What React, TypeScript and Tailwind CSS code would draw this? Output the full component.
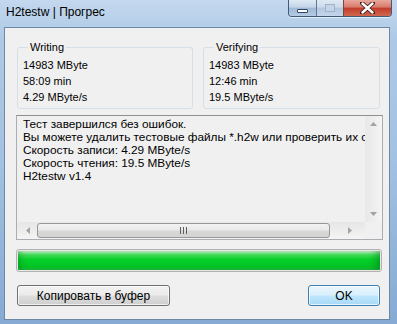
import React from "react";

const font = "font-['Liberation_Sans',Arial,sans-serif]";

function GroupBox({ title, lines, className }: { title: string; lines: string[]; className: string }) {
  return (
    <fieldset className={`rounded-[3px] border border-[#d5dfe5] pl-[5px] pt-[3px] pb-[3px] ${className}`}>
      <legend className="ml-[5px] px-[2px] text-[11px] leading-[14px] text-black">{title}</legend>
      {lines.map((l) => (
        <div key={l} className="text-[11px] leading-[16px] text-black">
          {l}
        </div>
      ))}
    </fieldset>
  );
}

function Arrow({ dir }: { dir: "up" | "down" | "left" | "right" }) {
  const pts = {
    up: "0,4 3.5,0 7,4",
    down: "0,0 3.5,4 7,0",
    left: "4,0 0,3.5 4,7",
    right: "0,0 4,3.5 0,7",
  }[dir];
  const vert = dir === "up" || dir === "down";
  return (
    <svg width={vert ? 7 : 4} height={vert ? 4 : 7} viewBox={vert ? "0 0 7 4" : "0 0 4 7"}>
      <polygon points={pts} fill="#a3a3a3" />
    </svg>
  );
}

function LogBox() {
  const lines = [
    "Тест завершился без ошибок.",
    "Вы можете удалить тестовые файлы *.h2w или проверить их снова",
    "Скорость записи: 4.29 MByte/s",
    "Скорость чтения: 19.5 MByte/s",
    "H2testw v1.4",
  ];
  return (
    <div className="mt-[6px] ml-[11px] grid h-[125px] w-[367px] grid-cols-[1fr_17px] grid-rows-[1fr_17px] border border-[#abadb3] border-t-[#8e8f8f] bg-[#f0f0f0]">
      <div className="overflow-hidden whitespace-nowrap pt-[2px] pl-[6px]">
        {lines.map((l) => (
          <div key={l} className="text-[11.8px] leading-[13px] text-black">
            {l}
          </div>
        ))}
      </div>
      {/* vertical scrollbar (disabled) */}
      <div className="flex flex-col items-center justify-between bg-[linear-gradient(to_right,#e8e8e8,#f4f4f4)] pt-[6px] pb-[6px]">
        <Arrow dir="up" />
        <Arrow dir="down" />
      </div>
      {/* horizontal scrollbar */}
      <div className="flex items-center bg-[linear-gradient(to_bottom,#e6e6e6,#f4f4f4)]">
        <div className="flex w-[20px] justify-center pl-[2px]">
          <Arrow dir="left" />
        </div>
        <div className="flex h-[15px] w-[293px] items-center justify-center rounded-[3px] border border-[#979797] bg-[linear-gradient(to_bottom,#f3f3f3,#e9e9e9_45%,#d8d8d8_55%,#d4d4d4)]">
          <div className="flex gap-[2px]">
            <div className="h-[7px] w-[1px] bg-[#5e5e5e]" />
            <div className="h-[7px] w-[1px] bg-[#5e5e5e]" />
            <div className="h-[7px] w-[1px] bg-[#5e5e5e]" />
          </div>
        </div>
        <div className="flex flex-1 justify-center pl-[4px]">
          <Arrow dir="right" />
        </div>
      </div>
      <div className="bg-[#f0f0f0]" />
    </div>
  );
}

function CaptionButtons() {
  return (
    <div className="mr-[5px] flex h-[17px] overflow-hidden rounded-b-[4px] border border-t-0 border-[#41597a] shadow-[0_1px_0_rgba(255,255,255,0.6)]">
      <div className="flex w-[28px] items-end justify-center border-r border-[#5d7898] bg-[linear-gradient(to_bottom,#dde8f4,#c4d5e8_45%,#9fb8d4_50%,#b5cbe3)] pb-[3px]">
        <div className="h-[4px] w-[11px] rounded-[1px] border border-[#2f4762] bg-white" />
      </div>
      <div className="flex w-[27px] items-center justify-center border-r border-[#7a4840] bg-[linear-gradient(to_bottom,#dfe9f4,#cbdaea_45%,#b2c7de_50%,#c4d6ea)]">
        <div className="h-[8px] w-[10px] border border-[#9fb4cc] bg-[#c5d5e6]" />
      </div>
      <div className="flex w-[47px] items-center justify-center bg-[linear-gradient(to_bottom,#e9a99c,#d87a6b_45%,#c13c2a_50%,#d0674f)]">
        <svg width="15" height="12" viewBox="0 0 15 12">
          <path d="M2 1 L13 11 M13 1 L2 11" stroke="#40201a" strokeWidth="4.2" strokeLinecap="round" />
          <path d="M2.5 1.5 L12.5 10.5 M12.5 1.5 L2.5 10.5" stroke="#ffffff" strokeWidth="2.4" strokeLinecap="round" />
        </svg>
      </div>
    </div>
  );
}

export default function App() {
  return (
    <div className={`h-[324px] w-[397px] overflow-hidden bg-[linear-gradient(to_bottom,#c4d8ee,#adc9e6_12%,#a3c1e1_50%,#86aad3)] ${font}`}>
      <div className="flex h-[27px] items-start justify-between">
        <div className="pt-[5px] pl-[6px] text-[12px] leading-[14px] text-black">H2testw | Прогрес</div>
        <CaptionButtons />
      </div>

      <div className="ml-[4px] flex h-[293px] w-[386px] flex-col border border-[#6d87a6] bg-[#f0f0f0]">
        <div className="mt-[12px] flex">
          <GroupBox
            title="Writing"
            lines={["14983 MByte", "58:09 min", "4.29 MByte/s"]}
            className="ml-[12px] w-[176px]"
          />
          <GroupBox
            title="Verifying"
            lines={["14983 MByte", "12:46 min", "19.5 MByte/s"]}
            className="ml-[10px] w-[177px]"
          />
        </div>

        <LogBox />

        <div className="mt-[9px] ml-[11px] h-[23px] w-[366px] rounded-[3px] border border-[#b2b2b2] bg-[#e6e6e6] p-[1px]">
          <div className="h-full w-full rounded-[1px] bg-[linear-gradient(to_bottom,#c9f2cc,#41db57_20%,#06cf2a_45%,#02c524_80%,#1cb93a)] shadow-[inset_6px_0_6px_-4px_rgba(0,90,20,0.35),inset_-8px_0_8px_-5px_rgba(0,90,20,0.45)]" />
        </div>

        <div className="mt-[13px] flex">
          <button className="ml-[12px] h-[21px] w-[153px] rounded-[3px] border border-[#707070] bg-[linear-gradient(to_bottom,#f2f2f2,#ebebeb_48%,#dddddd_52%,#cfcfcf)] text-[12px] leading-[14px] text-black shadow-[inset_0_0_0_1px_rgba(255,255,255,0.7)]">
            Копировать в буфер
          </button>
          <button className="mr-[9px] ml-auto h-[21px] w-[72px] rounded-[3px] border border-[#3c7fb1] bg-[linear-gradient(to_bottom,#eaf6fd,#d9f0fc_48%,#bee6fd_52%,#a7d9f5)] text-[12px] leading-[14px] text-black shadow-[inset_0_0_0_1px_rgba(255,255,255,0.7)]">
            OK
          </button>
        </div>
      </div>
    </div>
  );
}
